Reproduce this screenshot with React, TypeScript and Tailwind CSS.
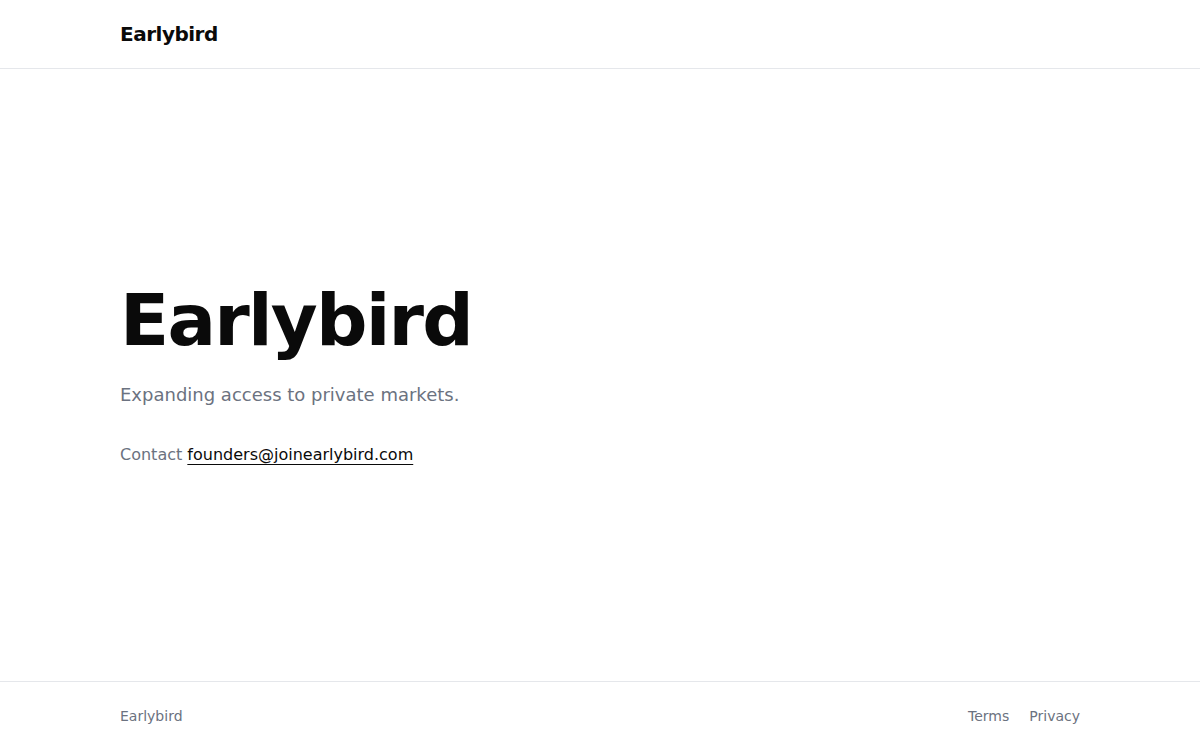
export default function App() {
  return (
    <div className="flex min-h-screen flex-col bg-white text-[#0a0a0a]" style={{ fontFamily: '"DejaVu Sans", sans-serif' }}>
      {/* Header */}
      <header className="border-b border-[#e5e7eb]">
        <div className="mx-auto max-w-5xl px-8 py-5">
          <span className="text-xl font-bold tracking-tight">Earlybird</span>
        </div>
      </header>

      {/* Hero */}
      <main className="flex flex-1 items-center">
        <div className="mx-auto w-full max-w-5xl px-8">
          <h1 className="text-7xl font-bold leading-none tracking-tight">Earlybird</h1>
          <p className="mt-[25px] text-lg text-[#6b7280]">Expanding access to private markets.</p>
          <p className="mt-[34px] text-base text-[#6b7280]">
            Contact{' '}
            <a href="#" className="text-[#0a0a0a] underline underline-offset-4">
              founders@joinearlybird.com
            </a>
          </p>
        </div>
      </main>

      {/* Footer */}
      <footer className="border-t border-[#e5e7eb]">
        <div className="mx-auto flex max-w-5xl items-center justify-between px-8 py-6 text-sm text-[#6b7280]">
          <span>Earlybird</span>
          <div className="flex gap-5">
            <a href="#">Terms</a>
            <a href="#">Privacy</a>
          </div>
        </div>
      </footer>
    </div>
  );
}
